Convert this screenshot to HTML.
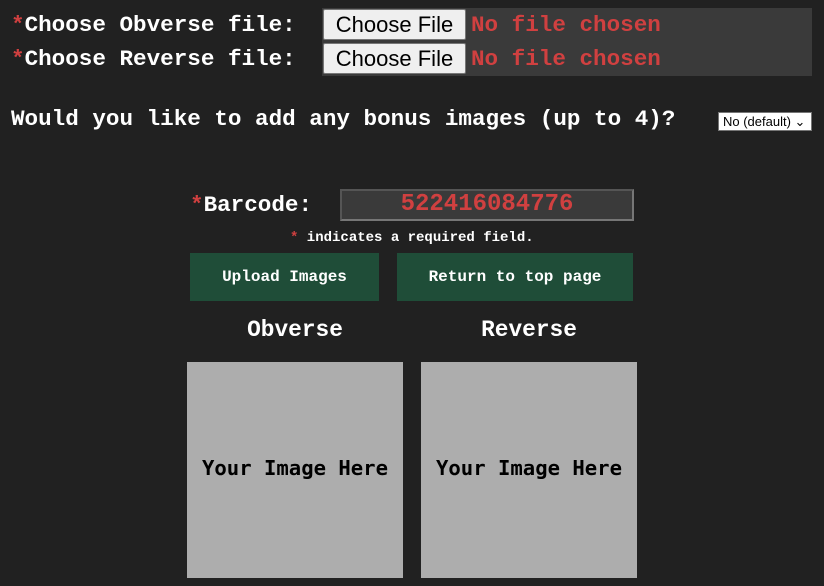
<!DOCTYPE html>
<html><head><style>
body{margin:0;width:824px;height:586px;background:#212121;overflow:hidden;position:relative;font-family:"Liberation Mono",monospace;font-weight:bold;color:#fff}
.a{position:absolute;white-space:nowrap}
.r{color:#d04040}
.fb{position:absolute;left:323px;width:143px;height:31px;background:#efefef;border:1px solid #767676;box-sizing:border-box;font:22px "Liberation Sans",sans-serif;color:#000;text-align:center;line-height:29px;border-radius:2px}
.btn{position:absolute;top:253px;height:48px;background:#1f4d38;font-size:16px;text-align:center;line-height:48px}
.img{position:absolute;top:362px;width:216px;height:216px;background:#adadad;color:#000;font:bold 20.6px "DejaVu Sans Mono",monospace;text-align:center;line-height:212px}
</style></head><body>
<div class="a" style="left:322px;top:8px;width:490px;height:68px;background:#3a3a3a"></div>
<div class="a" style="left:11px;top:9px;font-size:22.6px;line-height:32px"><span class="r">*</span>Choose Obverse file:</div>
<div class="a" style="left:11px;top:43px;font-size:22.6px;line-height:32px"><span class="r">*</span>Choose Reverse file:</div>
<div class="fb" style="top:9px">Choose File</div>
<div class="fb" style="top:43px">Choose File</div>
<div class="a r" style="left:471px;top:9px;font-size:22.6px;line-height:32px">No file chosen</div>
<div class="a r" style="left:471px;top:43px;font-size:22.6px;line-height:32px">No file chosen</div>
<div class="a" style="left:11px;top:103px;font-size:22.6px;line-height:32px">Would you like to add any bonus images (up to 4)?</div>
<div class="a" style="left:718px;top:112px;width:94px;height:19px;background:#fff;border:1px solid #767676;box-sizing:border-box;font:13px 'Liberation Sans',sans-serif;color:#000;line-height:17px;padding-left:4px;font-weight:normal">No (default) &#8964;</div>
<div class="a" style="left:190px;top:189px;font-size:22.6px;line-height:32px"><span class="r">*</span>Barcode:</div>
<div class="a r" style="left:340px;top:189px;width:294px;height:32px;background:#3a3a3a;border:2px solid #767676;border-top-color:#555;border-left-color:#555;box-sizing:border-box;font-size:24px;text-align:center;line-height:28px">522416084776</div>
<div class="a" style="left:290px;top:229px;font-size:14px;line-height:18px"><span class="r">*</span> indicates a required field.</div>
<div class="btn" style="left:190px;width:189px">Upload Images</div>
<div class="btn" style="left:397px;width:236px">Return to top page</div>
<div class="a" style="left:187px;width:216px;top:314px;text-align:center;font-size:22.8px;line-height:32px">Obverse</div>
<div class="a" style="left:421px;width:216px;top:314px;text-align:center;font-size:22.8px;line-height:32px">Reverse</div>
<div class="img" style="left:187px">Your Image Here</div>
<div class="img" style="left:421px">Your Image Here</div>
</body></html>
